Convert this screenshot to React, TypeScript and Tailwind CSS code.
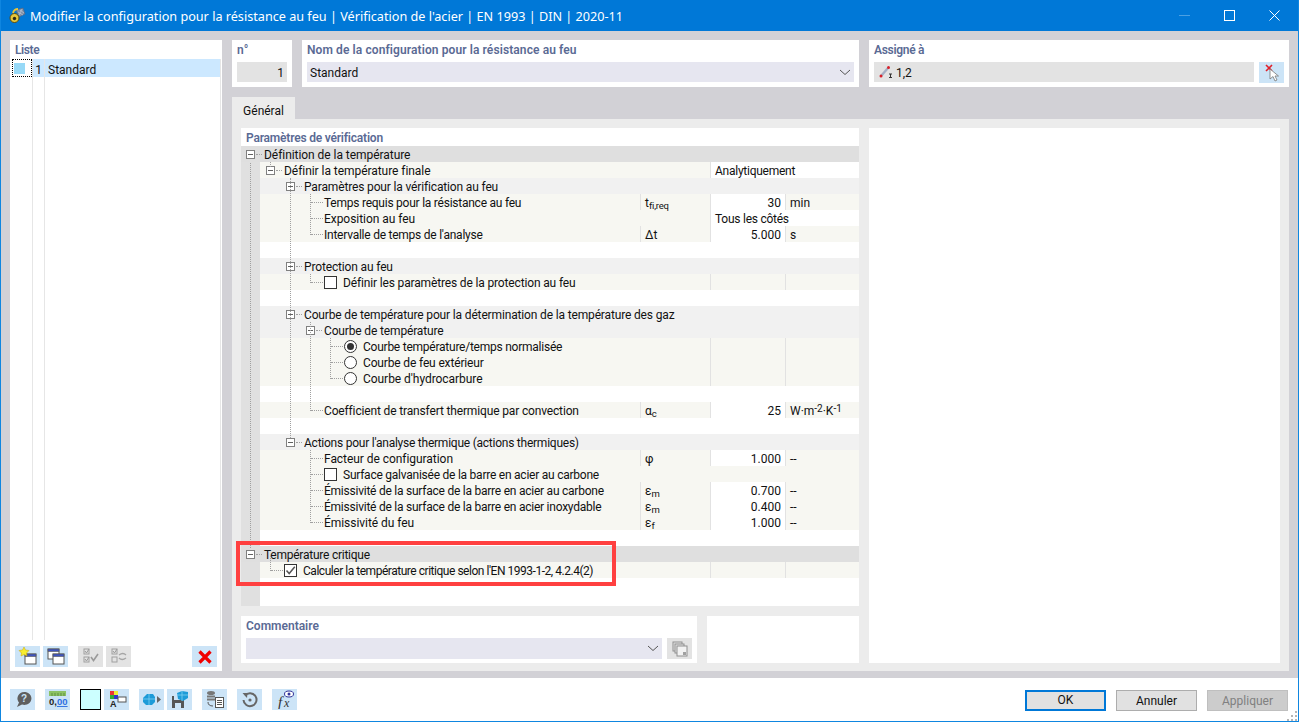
import React from "react";

type Row = {
	label?: string;
	level?: number;
	kind?: "head" | "top" | "leaf" | "blank" | "check" | "checked" | "radio" | "radioOn" | "sub";
	sym?: React.ReactNode;
	val?: string;
	unit?: React.ReactNode;
	wide?: string;
	cells?: boolean;
	tr?: string;
};

const Sub = ({ a, b }: { a: string; b: string }) => (
	<span>
		{a}
		<span className="text-[9.5px] tracking-[-0.2px] relative top-[2px]">{b}</span>
	</span>
);

const tight = "tracking-[-0.24px]";
const loose = "tracking-[-0.05px]";

const rows: Row[] = [
	{ label: "Définition de la température", level: 0, kind: "top", tr: loose },
	{ label: "Définir la température finale", level: 1, kind: "sub", wide: "Analytiquement", tr: loose },
	{ label: "Paramètres pour la vérification au feu", level: 2, kind: "head" },
	{ label: "Temps requis pour la résistance au feu", level: 3, kind: "leaf", sym: <Sub a="t" b="fi,req" />, val: "30", unit: "min", tr: tight },
	{ label: "Exposition au feu", level: 3, kind: "leaf", wide: "Tous les côtés", tr: loose },
	{ label: "Intervalle de temps de l'analyse", level: 3, kind: "leaf", sym: "Δt", val: "5.000", unit: "s", tr: tight },
	{ kind: "blank" },
	{ label: "Protection au feu", level: 2, kind: "head" },
	{ label: "Définir les paramètres de la protection au feu", level: 3, kind: "check", cells: true },
	{ kind: "blank" },
	{ label: "Courbe de température pour la détermination de la température des gaz", level: 2, kind: "head" },
	{ label: "Courbe de température", level: 3, kind: "head" },
	{ label: "Courbe température/temps normalisée", level: 4, kind: "radioOn", cells: true, tr: tight },
	{ label: "Courbe de feu extérieur", level: 4, kind: "radio", cells: true },
	{ label: "Courbe d'hydrocarbure", level: 4, kind: "radio", cells: true, tr: loose },
	{ kind: "blank" },
	{
		label: "Coefficient de transfert thermique par convection",
		level: 3,
		kind: "leaf",
		sym: <Sub a="α" b="c" />,
		val: "25",
		unit: (
			<span>
				W·m<span className="text-[10px] relative top-[-3px]">-2</span>·K<span className="text-[10px] relative top-[-3px]">-1</span>
			</span>
		),
	},
	{ kind: "blank" },
	{ label: "Actions pour l'analyse thermique (actions thermiques)", level: 2, kind: "head", tr: tight },
	{ label: "Facteur de configuration", level: 3, kind: "leaf", sym: "φ", val: "1.000", unit: "--", tr: loose },
	{ label: "Surface galvanisée de la barre en acier au carbone", level: 3, kind: "check", tr: tight },
	{ label: "Émissivité de la surface de la barre en acier au carbone", level: 3, kind: "leaf", sym: <Sub a="ε" b="m" />, val: "0.700", unit: "--", tr: tight },
	{ label: "Émissivité de la surface de la barre en acier inoxydable", level: 3, kind: "leaf", sym: <Sub a="ε" b="m" />, val: "0.400", unit: "--", tr: tight },
	{ label: "Émissivité du feu", level: 3, kind: "leaf", sym: <Sub a="ε" b="f" />, val: "1.000", unit: "--", tr: loose },
	{ kind: "blank" },
	{ label: "Température critique", level: 0, kind: "top", tr: tight },
	{ label: "Calculer la température critique selon l'EN 1993-1-2, 4.2.4(2)", level: 1, kind: "checked", cells: true, tr: "tracking-[-0.47px]" },
];

// dotted tree lines, coordinates relative to the tree box
const vLines = [
	{ x: 9, y: 17, h: 385 },
	{ x: 29, y: 16, h: 5 },
	{ x: 49, y: 32, h: 260 },
	{ x: 69, y: 48, h: 41 },
	{ x: 69, y: 128, h: 9 },
	{ x: 69, y: 176, h: 89 },
	{ x: 89, y: 192, h: 41 },
	{ x: 69, y: 304, h: 73 },
	{ x: 29, y: 410, h: 15 },
];

function Dots({ w }: { w: number }) {
	return <span className="block h-0 border-t border-dotted border-[#a0a0a0]" style={{ width: w }} />;
}

function TreeBox() {
	return (
		<span className="w-[9px] h-[9px] border border-[#808080] bg-white flex items-center justify-center shrink-0">
			<span className="w-[5px] h-px bg-[#606060]" />
		</span>
	);
}

function CheckBox({ on }: { on?: boolean }) {
	return (
		<span className="w-[13px] h-[13px] border border-[#333333] bg-white shrink-0 flex items-center justify-center">
			{on && (
				<svg width="11" height="11" viewBox="0 0 11 11">
					<path d="M1.5 5.5 L4.2 8.5 L9.8 1.8" fill="none" stroke="#555555" strokeWidth="1.5" />
				</svg>
			)}
		</span>
	);
}

function Radio({ on }: { on?: boolean }) {
	return (
		<span className="w-[13px] h-[13px] rounded-full border border-[#333333] bg-white shrink-0 flex items-center justify-center">
			{on && <span className="w-[7px] h-[7px] rounded-full bg-[#333333]" />}
		</span>
	);
}

function TreeRow({ r }: { r: Row }) {
	if (r.kind === "blank") return <div className="h-4 bg-white ml-[19px]" />;
	const lvl = r.level ?? 0;
	const top = r.kind === "top";
	const hasBox = top || r.kind === "head" || r.kind === "sub";
	const bg = top ? "bg-[#dfdfdf]" : r.kind === "head" ? "bg-[#f1f1f1]" : "bg-[#f7f7f2]";
	const pad = top ? 5 : hasBox ? 20 * lvl - 14 : 20 * lvl - 9;
	const showCells = r.cells || !!r.val;
	return (
		<div className={`h-4 flex ${top ? "" : "ml-[19px]"} ${bg}`}>
			<div className="flex-1 min-w-0 flex items-center whitespace-nowrap" style={{ paddingLeft: pad }}>
				{hasBox && <TreeBox />}
				{hasBox && (
					<span className="ml-px mr-px">
						<Dots w={6} />
					</span>
				)}
				{!hasBox && <Dots w={12} />}
				{(r.kind === "check" || r.kind === "checked") && (
					<span className="ml-px mr-[5px] mt-px">
						<CheckBox on={r.kind === "checked"} />
					</span>
				)}
				{(r.kind === "radio" || r.kind === "radioOn") && (
					<span className="ml-px mr-[5px] mt-px">
						<Radio on={r.kind === "radioOn"} />
					</span>
				)}
				<span className={`ml-px pt-[2px] ${r.tr ?? "tracking-[-0.15px]"}`}>{r.label}</span>
			</div>
			{!top && r.kind !== "head" && (
				<>
					<div className={`w-[70px] pl-[4px] pt-px whitespace-nowrap ${r.sym ? "border-l border-[#e2e2e2]" : ""}`}>{r.sym}</div>
					{r.wide ? (
						<div className="w-[149px] bg-white border-l border-[#e2e2e2] pl-[4px] pt-px whitespace-nowrap tracking-[-0.25px]">{r.wide}</div>
					) : (
						<>
							<div className={`w-[75px] text-right pr-[4px] pt-px ${showCells ? "border-l border-[#e2e2e2]" : ""} ${r.val ? "bg-white" : ""}`}>{r.val}</div>
							<div className={`w-[74px] pl-[4px] pt-px whitespace-nowrap ${showCells ? "border-l border-[#e2e2e2]" : ""}`}>{r.unit}</div>
						</>
					)}
				</>
			)}
		</div>
	);
}

function Tb({ children, off, w = 25 }: { children: React.ReactNode; off?: boolean; w?: number }) {
	return (
		<button className={`h-[21px] flex items-center justify-center shrink-0 ${off ? "bg-[#e3e3e3]" : "bg-[#cce4f7]"}`} style={{ width: w }}>
			{children}
		</button>
	);
}

const Win = ({ x, y }: { x: number; y: number }) => (
	<g>
		<rect x={x} y={y} width="11" height="10" fill="#ffffff" stroke="#555555" />
		<rect x={x} y={y} width="11" height="2.5" fill="#3f55c0" stroke="#555555" strokeWidth="0.6" />
	</g>
);

function Icon({ children }: { children: React.ReactNode }) {
	return (
		<svg width="20" height="19" viewBox="0 0 20 19">
			{children}
		</svg>
	);
}

const Chevron = () => (
	<svg width="12" height="7" viewBox="0 0 12 7">
		<path d="M1 1 L6 5.5 L11 1" fill="none" stroke="#555555" />
	</svg>
);

const label = "font-semibold text-[#5a6a94]";

export default function App() {
	return (
		<div className="w-[1299px] h-[722px] flex flex-col border-x border-b border-[#0f86e0] bg-white text-[12px] leading-4 text-[#111111] overflow-hidden relative" style={{ fontFamily: 'Roboto, "Noto Sans", sans-serif' }}>
			{/* title bar */}
			<div className="h-[31px] bg-[#0078d7] -mx-px flex items-center text-white shrink-0" style={{ fontFamily: '"Noto Sans", sans-serif' }}>
				<svg className="ml-[9px] mr-[4px]" width="17" height="17" viewBox="0 0 17 17">
					<path d="M7 3 L14 1 L16 7 L10 10 Z" fill="#7f8fa8" stroke="#55637a" strokeWidth="0.6" />
					<path d="M9 5 L14 8 M11 3 L15 6 M13 2 L10 8" stroke="#c8d0dc" strokeWidth="0.6" />
					<circle cx="5.5" cy="11" r="4.5" fill="#e7c63a" stroke="#5a4a10" />
					<circle cx="5.5" cy="11.5" r="1.7" fill="#2e2a14" />
					<path d="M4 6 Q5 2 9 2" fill="none" stroke="#e7c63a" strokeWidth="1.8" />
				</svg>
				<span className="text-[12.65px]">Modifier la configuration pour la résistance au feu | Vérification de l'acier | EN 1993 | DIN | 2020-11</span>
				<div className="ml-auto flex items-center gap-[34px] pr-[19px]">
					<svg width="11" height="11" viewBox="0 0 11 11">
						<path d="M0 5.5 H11" stroke="#4ba0e3" />
					</svg>
					<svg width="11" height="11" viewBox="0 0 11 11">
						<rect x="0.5" y="0.5" width="10" height="10" fill="none" stroke="#ffffff" />
					</svg>
					<svg width="11" height="11" viewBox="0 0 11 11">
						<path d="M0.5 0.5 L10.5 10.5 M10.5 0.5 L0.5 10.5" stroke="#ffffff" />
					</svg>
				</div>
			</div>

			{/* body */}
			<div className="flex-1 bg-[#d2d1d6] flex gap-[10px] pl-[9px] pr-[9px] pt-[9px] pb-[7px] min-h-0">
				{/* list */}
				<div className="w-[212px] bg-white flex flex-col shrink-0 relative">
					<div className={`h-[19px] pl-[5px] pt-[2px] tracking-[-0.4px] ${label}`}>Liste</div>
					<div className="flex-1 flex min-h-0">
						<div className="w-[23px] h-full border-r border-[#e6e6e6] shrink-0">
							<div className="h-[18px] ml-[2px] w-[20px] border border-dotted border-black flex items-center pl-px">
								<span className="w-[11px] h-[11px] bg-[#97d9f7]" />
							</div>
						</div>
						<div className="w-[12px] border-r border-[#e6e6e6] shrink-0">
							<div className="h-[18px] bg-[#cce8ff] text-right pr-[2px] leading-[22px]">1</div>
						</div>
						<div className="w-[176px] border-r border-[#e6e6e6]">
							<div className="h-[18px] bg-[#cce8ff] pl-[3px] leading-[22px]">Standard</div>
						</div>
					</div>
					<div className="absolute left-0 right-0 bottom-0 h-[31px] bg-white flex items-start pt-[6px] pl-[5px] pr-[5px]">
						<div className="flex gap-[3px]">
							<Tb>
								<Icon>
									<Win x={7} y={7} />
									<path d="M6 0 L7.5 3 L11 3.5 L8.5 6 L9 9 L6 7.5 L3 9 L3.5 6 L1 3.5 L4.5 3 Z" fill="#f7ee2f" stroke="#c9a300" strokeWidth="0.5" />
								</Icon>
							</Tb>
							<Tb>
								<Icon>
									<Win x={2} y={2} />
									<Win x={7} y={7} />
								</Icon>
							</Tb>
						</div>
						<div className="flex gap-[3px] ml-[10px]">
							<Tb off>
								<Icon>
									<rect x="3" y="2" width="5" height="5" fill="none" stroke="#a0a0a0" />
									<rect x="3" y="10" width="5" height="5" fill="none" stroke="#a0a0a0" />
									<path d="M4 4 L5.5 6 L8 2 M4 12 L5.5 14 L8 10" fill="none" stroke="#9a9a9a" />
									<path d="M10 10 L12.5 13.5 L17 7" fill="none" stroke="#9a9a9a" strokeWidth="1.6" />
								</Icon>
							</Tb>
							<Tb off>
								<Icon>
									<rect x="3" y="2" width="5" height="5" fill="none" stroke="#a0a0a0" />
									<rect x="3" y="10" width="5" height="5" fill="none" stroke="#a0a0a0" />
									<path d="M4 4 L5.5 6 L8 2" fill="none" stroke="#9a9a9a" />
									<path d="M10 8 Q14 5 17 8 M17 11 Q13 14 10 11" fill="none" stroke="#a5a5a5" strokeWidth="1.3" />
								</Icon>
							</Tb>
						</div>
						<div className="ml-auto">
							<Tb>
								<svg width="14" height="14" viewBox="0 0 14 14">
									<path d="M1.5 1.5 L12.5 12.5 M12.5 1.5 L1.5 12.5" stroke="#f00000" strokeWidth="3.2" />
								</svg>
							</Tb>
						</div>
					</div>
				</div>

				{/* right side */}
				<div className="w-[1057px] flex flex-col min-w-0">
					<div className="h-[47px] flex gap-[10px] shrink-0">
						<div className="w-[60px] bg-white px-[5px]">
							<div className={`h-[22px] pt-[2px] ${label}`}>n°</div>
							<div className="h-[20px] bg-[#e3e3e3] text-right pr-[3px] leading-[22px]">1</div>
						</div>
						<div className="w-[557px] bg-white px-[5px]">
							<div className={`h-[22px] pt-[2px] tracking-[0.1px] ${label}`}>Nom de la configuration pour la résistance au feu</div>
							<div className="h-[20px] bg-[#e6e6f0] flex items-center justify-between pl-[3px] pr-[3px]">
								<span className="pt-[2px]">Standard</span>
								<Chevron />
							</div>
						</div>
						<div className="w-[420px] bg-white px-[5px]">
							<div className={`h-[22px] pt-[2px] tracking-[-0.3px] ${label}`}>Assigné à</div>
							<div className="flex gap-[5px]">
								<div className="w-[380px] h-[20px] bg-[#e3e3e3] flex items-center pl-[5px] gap-[2px]">
									<svg width="15" height="14" viewBox="0 0 15 14">
										<path d="M2 11 L9 3" stroke="#a3aec4" strokeWidth="2.4" />
										<circle cx="2" cy="11" r="1.5" fill="#d8202a" />
										<circle cx="9.5" cy="2.5" r="1.5" fill="#d8202a" />
										<path d="M10 9 H13 M11.5 9 V12.5 M10 12.5 H13" stroke="#333333" />
									</svg>
									<span className="pt-[2px]">1,2</span>
								</div>
								<Tb>
									<svg width="18" height="18" viewBox="0 0 18 18">
										<path d="M3 1 L9 7 M9 1 L3 7" stroke="#e0202a" strokeWidth="1.6" />
										<path d="M7 5 L7 15 L10 12.5 L12 17 L14 16 L12 12 L15.5 12 Z" fill="#ffffff" stroke="#777777" strokeWidth="0.8" />
									</svg>
								</Tb>
							</div>
						</div>
					</div>

					<div className="h-[10px] shrink-0" />
					<div className="h-[22px] w-[63px] bg-[#ececec] flex items-center justify-center pt-[5px] shrink-0">Général</div>

					{/* tab panel */}
					<div className="flex-1 bg-[#ececec] flex gap-[10px] pl-[9px] pr-[9px] pt-[9px] pb-[8px] min-h-0">
						<div className="w-[618px] flex flex-col shrink-0">
							<div className="h-[478px] bg-white shrink-0 relative">
								<div className={`h-[18px] pl-[5px] pt-[2px] tracking-[-0.2px] ${label}`}>Paramètres de vérification</div>
								<div className="relative h-[460px] bg-[#e0e0e0]">
									{rows.map((r, i) => (
										<TreeRow key={i} r={r} />
									))}
									<div className="ml-[19px] h-[28px] bg-white" />
									{vLines.map((l, i) => (
										<span key={i} className="absolute border-l border-dotted border-[#a0a0a0]" style={{ left: l.x, top: l.y, height: l.h }} />
									))}
								</div>
								{/* highlight box */}
								<div className="absolute left-[-5px] top-[413px] w-[380px] h-[45px] border-4 border-[#ff4040]" />
							</div>
							<div className="h-[10px] shrink-0" />
							<div className="h-[47px] flex gap-[10px] shrink-0">
								<div className="w-[456px] bg-white px-[5px]">
									<div className={`h-[22px] pt-[2px] ${label}`}>Commentaire</div>
									<div className="flex gap-[5px]">
										<div className="w-[416px] h-[21px] bg-[#e6e6f0] flex items-center justify-end pr-[3px]">
											<Chevron />
										</div>
										<Tb off>
											<svg width="16" height="16" viewBox="0 0 16 16">
												<rect x="1" y="1" width="9" height="9" fill="none" stroke="#909090" />
												<rect x="3" y="3" width="9" height="9" fill="#e3e3e3" stroke="#909090" />
												<rect x="5" y="5" width="10" height="10" fill="#f2f2f2" stroke="#909090" />
												<rect x="11" y="11" width="3" height="3" fill="#a0a0a0" />
											</svg>
										</Tb>
									</div>
								</div>
								<div className="w-[152px] bg-white" />
							</div>
						</div>
						<div className="w-[411px] bg-white shrink-0" />
					</div>
				</div>
			</div>

			{/* footer */}
			<div className="h-[43px] bg-white flex items-start pt-[11px] pl-[9px] pr-[10px] shrink-0">
				<div className="flex">
					<Tb>
						<svg width="18" height="17" viewBox="0 0 18 17">
							<path d="M3 16 L5 11.5 A7 6.5 0 1 1 8 13.5 Z" fill="#5f5f5f" />
							<text x="10" y="11" fontSize="10" fontWeight="700" textAnchor="middle" fill="#cce4f7" fontFamily="Liberation Sans">?</text>
						</svg>
					</Tb>
					<span className="ml-[10px]">
						<Tb>
							<svg width="20" height="19" viewBox="0 0 20 19">
								<rect x="1" y="1" width="17" height="5" fill="#8cc265" />
								<path d="M4 3 V6 M7 3 V6 M10 3 V6 M13 3 V6 M16 3 V6" stroke="#5f8f42" />
								<text x="1" y="15" fontSize="9.5" fontWeight="700" fill="#222222" fontFamily="Liberation Sans">0,</text>
								<text x="9" y="15" fontSize="9.5" fontWeight="700" fill="#2f6fe0" textDecoration="underline" fontFamily="Liberation Sans">00</text>
							</svg>
						</Tb>
					</span>
					<span className="w-[21px] h-[21px] bg-[#ccffff] border border-black ml-[10px]" />
					<span className="ml-[3px]">
						<Tb>
							<Icon>
								<rect x="3" y="1" width="4" height="4" fill="#e33" />
								<rect x="7" y="1" width="4" height="4" fill="#ee3" />
								<rect x="3" y="5" width="4" height="4" fill="#3a3" />
								<rect x="7" y="5" width="4" height="4" fill="#33c" />
								<rect x="11" y="7" width="8" height="5" fill="#fff" stroke="#555" />
								<text x="3" y="17" fontSize="9" fontWeight="700" fill="#222" fontFamily="Liberation Sans">A</text>
							</Icon>
						</Tb>
					</span>
					<span className="ml-[10px]">
						<Tb>
							<Icon>
								<path d="M1 8 L5 4 L11 4 L13 7 L13 12 L10 15 L4 15 L1 12 Z" fill="#1d9bd8" />
								<path d="M7 4 V15 M1 9 H13" stroke="#7fd0f2" strokeWidth="0.8" />
								<path d="M15 6 L19 9.5 L15 13 Z" fill="#666666" />
							</Icon>
						</Tb>
					</span>
					<span className="ml-[3px]">
						<Tb>
							<Icon>
								<path d="M2 6 H12 L14 8 V18 H2 Z" fill="#555555" />
								<rect x="4" y="6" width="6" height="4" fill="#cce4f7" />
								<rect x="5" y="13" width="6" height="5" fill="#cce4f7" />
								<path d="M7 3 L12 1 L18 2 L18 8 L13 11 L8 9 Z" fill="#1d9bd8" />
								<path d="M12 1 V11 M7 5 H18" stroke="#7fd0f2" strokeWidth="0.8" />
							</Icon>
						</Tb>
					</span>
					<span className="ml-[10px]">
						<Tb>
							<Icon>
								<ellipse cx="6" cy="3" rx="4" ry="2" fill="#777" />
								<rect x="2" y="5.5" width="8" height="2" fill="#777" />
								<rect x="2" y="8.5" width="8" height="2" fill="#777" />
								<path d="M3 12 Q3 16 8 16" fill="none" stroke="#555" />
								<rect x="10.5" y="7.5" width="8" height="10" fill="#fff" stroke="#555" />
								<path d="M12 10.5 H17 M12 12.5 H17 M12 14.5 H17" stroke="#555" />
							</Icon>
						</Tb>
					</span>
					<span className="ml-[10px]">
						<Tb>
							<svg width="18" height="18" viewBox="0 0 18 18">
								<path d="M4 4.5 A6.5 6.5 0 1 1 2.5 9" fill="none" stroke="#666666" strokeWidth="2" />
								<path d="M1.5 2 L6.5 2 L6 7 Z" fill="#666666" />
								<circle cx="9" cy="9" r="1.6" fill="#666666" />
							</svg>
						</Tb>
					</span>
					<span className="ml-[10px]">
						<Tb>
							<Icon>
								<text x="3" y="17" fontSize="15" fontStyle="italic" fill="#333" fontFamily="Liberation Serif">f</text>
								<text x="9" y="17" fontSize="12" fontStyle="italic" fill="#333" fontFamily="Liberation Serif">x</text>
								<ellipse cx="14" cy="4" rx="4.5" ry="3" fill="#ffffff" stroke="#333399" />
								<circle cx="14" cy="4" r="1.5" fill="#333399" />
							</Icon>
						</Tb>
					</span>
				</div>
				<div className="ml-auto flex gap-[10px] pt-px">
					<button className="w-[81px] h-[21px] bg-[#e1e1e1] border-2 border-[#0078d7] leading-[17px]">OK</button>
					<button className="w-[81px] h-[21px] bg-[#e1e1e1] border border-[#adadad]">Annuler</button>
					<button className="w-[81px] h-[21px] bg-[#cccccc] border border-[#bfbfbf] text-[#808080]">Appliquer</button>
				</div>
			</div>
			{/* resize grip */}
			<svg className="absolute right-0 bottom-0" width="11" height="11" viewBox="0 0 11 11">
				<path d="M8 1 h2 v2 h-2 Z M8 5 h2 v2 h-2 Z M4 5 h2 v2 h-2 Z M8 9 h2 v2 h-2 Z M4 9 h2 v2 h-2 Z M0 9 h2 v2 h-2 Z" fill="#b5b5b5" />
			</svg>
		</div>
	);
}
